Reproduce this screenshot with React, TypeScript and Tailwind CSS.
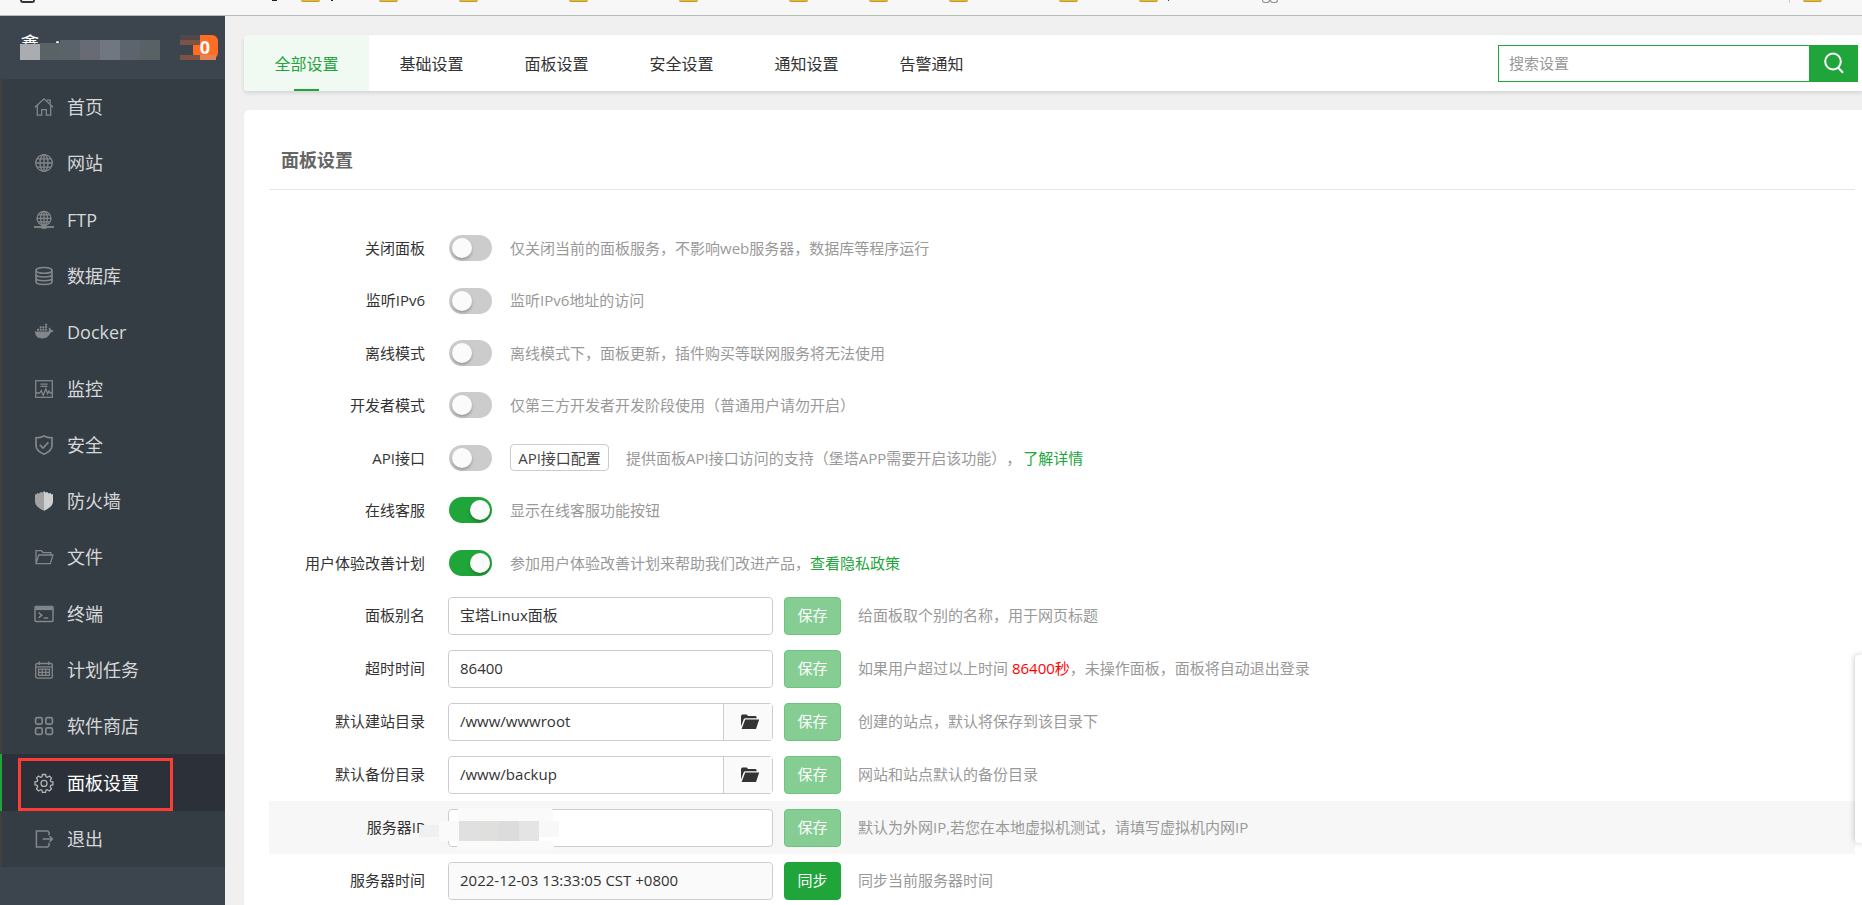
import { useState } from 'react';
import type { ReactNode } from 'react';

interface MenuItem {
  id: string;
  label: string;
  icon: ReactNode;
}

const svgProps = {
  width: 20,
  height: 20,
  viewBox: '0 0 20 20',
  fill: 'none',
  stroke: 'currentColor',
  strokeWidth: 1.3,
  'aria-hidden': true,
} as const;

const HomeIcon = () => (
  <svg {...svgProps}>
    <path d="M1 10.2 10 1.8l9 8.4M3.3 8.6v9.6h4.4v-5.6h4.6v5.6h4.4V8.6M12.8 3.2h3.4v3.4" />
  </svg>
);

const GlobeIcon = () => (
  <svg {...svgProps}>
    <circle cx="10" cy="10" r="8.3" />
    <ellipse cx="10" cy="10" rx="4" ry="8.3" />
    <path d="M10 1.7v16.6M1.7 10h16.6M3 5.8h14M3 14.2h14" />
  </svg>
);

const FtpIcon = () => (
  <svg {...svgProps}>
    <circle cx="10" cy="8.3" r="7" />
    <ellipse cx="10" cy="8.3" rx="3.4" ry="7" />
    <path d="M10 1.3v15M3 8.3h14M4.2 4.8h11.6M4.2 11.8h11.6" />
    <path d="M0 17h20" strokeWidth="1.8" />
    <rect x="7.5" y="15.2" width="5" height="3.6" fill="currentColor" stroke="none" />
  </svg>
);

const DatabaseIcon = () => (
  <svg {...svgProps} strokeWidth="1.6">
    <ellipse cx="10" cy="4.4" rx="8" ry="2.9" />
    <path d="M2 4.4v11.4c0 1.6 3.6 2.7 8 2.7s8-1.1 8-2.7V4.4M2 8.3c0 1.6 3.6 2.7 8 2.7s8-1.1 8-2.7M2 12.1c0 1.6 3.6 2.7 8 2.7s8-1.1 8-2.7" />
  </svg>
);

const DockerIcon = () => (
  <svg {...svgProps} fill="currentColor" stroke="none">
    <path d="M1 9.6h13.6c.5-1 .5-2.3-.1-3.3l.8-.8c1 .6 1.6 1.5 1.7 2.6 1-.2 2 0 2.6.5-.5 1.4-1.7 1.9-3 1.9-1.4 3.9-4.3 6-8.3 6C3.5 16.5 1 14 1 9.6z" />
    <path d="M3 6.8h2v2H3zM5.7 6.8h2v2h-2zM8.4 6.8h2v2h-2zM11.1 6.8h2v2h-2zM5.7 4.2h2v2h-2zM8.4 4.2h2v2h-2zM11.1 4.2h2v2h-2zM11.1 1.7h2v2h-2z" />
  </svg>
);

const MonitorIcon = () => (
  <svg {...svgProps}>
    <rect x="1.7" y="1.7" width="16.6" height="16.6" />
    <path d="M6.5 5.2h7M6.5 7.4h7M2 14h3.6l1.6-2.4 2 4.6 2.6-6.4 1.8 4.8 1.4-2.6 1.2 2H18" />
  </svg>
);

const SafeIcon = () => (
  <svg {...svgProps} strokeWidth="1.7">
    <path d="M10 1c2.4 1.2 5 1.8 8 1.8v7.4c0 4.2-3.4 7-8 9-4.6-2-8-4.8-8-9V2.8C5 2.8 7.6 2.2 10 1z" />
    <path d="m5.8 9.8 3.2 3.2 5.4-5.6" />
  </svg>
);

const FirewallIcon = () => (
  <svg {...svgProps} stroke="none">
    <path d="M10 0 8.4 1.6 6.8 1 5.2 2.6 3 2v1.2H1v7.2c0 4 4 7.2 9 9.4z" fill="#a2a2a2" />
    <path d="m10 0 1.6 1.6 1.6-.6 1.6 1.6L17 2v1.2h2v7.2c0 4-4 7.2-9 9.4z" fill="#cfcfcf" />
  </svg>
);

const FolderIcon = () => (
  <svg {...svgProps}>
    <path d="M2 16V3.7h5.4l1.8 2h7.6v2.2M2 16.6 4.7 8h14.2l-2.6 8.6z" />
  </svg>
);

const TerminalIcon = () => (
  <svg {...svgProps} strokeWidth="1.5">
    <rect x="1" y="2.5" width="18" height="15" rx="1" />
    <path d="M1.5 4.6h17" strokeWidth="3" />
    <path d="m4.6 8.6 3.2 2.6-3.2 2.6M9.6 14h4.6" />
  </svg>
);

const CalendarIcon = () => (
  <svg {...svgProps}>
    <rect x="1.7" y="3.5" width="16.6" height="14.6" rx="1.6" />
    <path d="M5.3 1.4v3.6M14.7 1.4v3.6M1.7 6.8h16.6M4.6 9.2h10.8v6.2H4.6zM4.6 12.3h10.8M8.2 9.2v6.2M11.8 9.2v6.2" />
  </svg>
);

const AppsIcon = () => (
  <svg {...svgProps} strokeWidth="1.7">
    <rect x="1.6" y="1.6" width="6.6" height="6.6" rx="1.6" />
    <rect x="11.8" y="1.6" width="6.6" height="6.6" rx="1.6" />
    <rect x="1.6" y="11.8" width="6.6" height="6.6" rx="1.6" />
    <rect x="11.8" y="11.8" width="6.6" height="6.6" rx="1.6" />
  </svg>
);

const GearIcon = () => (
  <svg {...svgProps} stroke="#b0b2b4">
    <path d="M8.4 1.5h3.2l.4 2.2 1.5.6 1.9-1.3 2.2 2.2-1.3 1.9.6 1.5 2 .3v3l-2.1.5-.6 1.5 1.3 1.9-2.2 2.2-1.9-1.3-1.5.6-.4 2.2H8.4L8 17.3l-1.5-.6L4.6 18l-2.2-2.2 1.3-1.9-.6-1.5-2.1-.5v-3l2.1-.4.6-1.5-1.3-1.9L4.6 3l1.9 1.3L8 3.7z" />
    <circle cx="10" cy="10.4" r="3" />
  </svg>
);

const ExitIcon = () => (
  <svg {...svgProps} strokeWidth="1.5">
    <path d="M15 6.2V3.4L13.6 2H2.4v16h11.2l1.4-1.4v-2.8M8.6 10H18M15.6 7.2 18.4 10l-2.8 2.8" />
  </svg>
);

const menu: MenuItem[] = [
  { id: 'home', label: '首页', icon: <HomeIcon /> },
  { id: 'site', label: '网站', icon: <GlobeIcon /> },
  { id: 'ftp', label: 'FTP', icon: <FtpIcon /> },
  { id: 'database', label: '数据库', icon: <DatabaseIcon /> },
  { id: 'docker', label: 'Docker', icon: <DockerIcon /> },
  { id: 'control', label: '监控', icon: <MonitorIcon /> },
  { id: 'safe', label: '安全', icon: <SafeIcon /> },
  { id: 'firewall', label: '防火墙', icon: <FirewallIcon /> },
  { id: 'files', label: '文件', icon: <FolderIcon /> },
  { id: 'terminal', label: '终端', icon: <TerminalIcon /> },
  { id: 'crontab', label: '计划任务', icon: <CalendarIcon /> },
  { id: 'soft', label: '软件商店', icon: <AppsIcon /> },
  { id: 'config', label: '面板设置', icon: <GearIcon /> },
  { id: 'exit', label: '退出', icon: <ExitIcon /> },
];

const tabs = ['全部设置', '基础设置', '面板设置', '安全设置', '通知设置', '告警通知'];

const bookmark = 'w-[19px] h-0.5 rounded-b-sm bg-[#e5b83b] border-b border-[#bf9a2c]';

// Lower edge of the browser's bookmark bar
const bookmarks = [
  'ml-5 w-[15px] h-[3px] rounded-b border-2 border-t-0 border-[#333]',
  'ml-[237px] w-[5px] h-px bg-[#222]',
  `ml-[24px] ${bookmark}`,
  'ml-[11px] w-0.5 h-px bg-[#222]',
  `ml-[46px] ${bookmark}`,
  `ml-[61px] ${bookmark}`,
  `ml-[91px] ${bookmark}`,
  `ml-[91px] ${bookmark}`,
  `ml-[91px] ${bookmark}`,
  `ml-[61px] ${bookmark}`,
  `ml-[61px] ${bookmark}`,
  `ml-[91px] ${bookmark}`,
  `ml-[61px] ${bookmark}`,
  'ml-[10px] w-px h-px bg-[#444]',
  'ml-[93px] w-2 h-[3px] rounded-b-sm border border-t-0 border-[#8a8d92]',
  'w-2 h-[3px] rounded-b-sm border border-t-0 border-[#8a8d92]',
  'ml-auto w-px h-[3px] bg-[#ccc]',
  `ml-[13px] mr-10 ${bookmark}`,
];

function BrowserEdge() {
  return (
    <div className="flex h-4 shrink-0 items-start border-b border-[#b9bdba] bg-[#f7f7f7]">
      {bookmarks.map((cls, i) => (
        <span key={i} className={`shrink-0 ${cls}`} />
      ))}
    </div>
  );
}

function SidebarHeader() {
  return (
    <div className="flex h-[63px] items-start justify-between pt-[19px] pl-5 pr-[7px]">
      <div className="relative h-[25px] w-[140px]">
        <span className="block text-xl leading-5 text-white">鑫</span>
        <span className="absolute left-[36px] top-[6px] size-[3px] rounded-t-full bg-white" />
        <div className="absolute inset-x-0 bottom-0 flex items-end">
          <i className="h-4 w-5 bg-[#a9adb2]" />
          <i className="h-[17px] w-5 bg-[#596265]" />
          <i className="h-5 w-5 bg-[#5a626a]" />
          <i className="h-5 w-5 bg-[#686b73]" />
          <i className="h-5 w-5 bg-[#707780]" />
          <i className="h-5 w-5 bg-[#5d646e]" />
          <i className="h-5 w-5 bg-[#586164]" />
        </div>
      </div>
      <div className="relative flex w-[38px] justify-end">
        <span className="h-6 w-[25px] rounded-md bg-[#ff6c23] pr-px text-center text-lg leading-[24px] font-bold text-white">
          0
        </span>
        <div className="absolute left-0 top-0 flex flex-col">
          <i className="h-[5px] w-5 bg-[#51484c]" />
          <i className="h-[5px] w-5 bg-[#7c5343]" />
          <i className="h-[10px] w-[13px] bg-[#3c444d]" />
          <div className="flex">
            <i className="h-[5px] w-5 bg-[#7c5343]" />
            <i className="h-[5px] w-4 bg-[#e18356]" />
          </div>
        </div>
      </div>
    </div>
  );
}

function Sidebar() {
  const [active, setActive] = useState('config');

  return (
    <aside className="w-[225px] shrink-0 bg-[#3c444d]">
      <SidebarHeader />
      <ul className="grid h-[788px] auto-rows-fr bg-[#353d44]">
        {menu.map((item) => {
          const isActive = item.id === active;
          return (
            <li key={item.id} className="relative flex">
              <a
                href={`#${item.id}`}
                onClick={() => setActive(item.id)}
                className={`flex flex-1 items-center gap-[13px] border-l-2 pl-8 text-lg ${
                  isActive
                    ? 'border-[#20a53a] bg-[#2c3038] text-white'
                    : 'border-[#43403f] text-[#d6d7d9]'
                }`}
              >
                <span className="text-[#83878a]">{item.icon}</span>
                {item.label}
              </a>
              {item.id === 'config' && (
                <span className="pointer-events-none absolute left-[18px] top-1 h-[53px] w-[155px] border-3 border-[#ff3b36]" />
              )}
            </li>
          );
        })}
      </ul>
    </aside>
  );
}

function TopBar() {
  const [current, setCurrent] = useState(0);

  return (
    <div className="flex h-14 shrink-0 items-stretch justify-between rounded-l bg-white pr-1 shadow-[0_2px_4px_rgba(0,0,0,0.12)]">
      <nav className="flex">
        {tabs.map((tab, i) => (
          <button
            key={tab}
            type="button"
            onClick={() => setCurrent(i)}
            className={`relative w-[125px] cursor-pointer pt-0.5 text-base ${
              i === current ? 'rounded-l bg-[#f0f9f2] text-[#20a53a]' : 'text-[#333]'
            }`}
          >
            {tab}
            {i === current && (
              <span className="absolute bottom-0 left-[50px] h-0.5 w-[25px] bg-[#20a53a]" />
            )}
          </button>
        ))}
      </nav>
      <form className="flex h-[37px] w-[360px] self-center" onSubmit={(e) => e.preventDefault()}>
        <input
          type="text"
          aria-label="搜索设置"
          placeholder="搜索设置"
          className="min-w-0 flex-1 border border-r-0 border-[#20a53a] px-2.5 text-[15px] outline-none placeholder:text-[#999]"
        />
        <button
          type="submit"
          aria-label="搜索"
          className="flex w-[49px] items-center justify-center bg-[#20a53a] text-white"
        >
          <svg width="22" height="22" viewBox="0 0 22 22" fill="none" stroke="currentColor" strokeWidth="2">
            <ellipse cx="10" cy="9.5" rx="7.8" ry="8" />
            <path d="m15 15.5 5 5.2" />
          </svg>
        </button>
      </form>
    </div>
  );
}

interface SwitchRowProps {
  id: string;
  label: string;
  defaultOn?: boolean;
  children: ReactNode;
}

function SwitchRow({ id, label, defaultOn = false, children }: SwitchRowProps) {
  const [on, setOn] = useState(defaultOn);

  return (
    <div className="flex items-center text-[15px] text-[#999]">
      <label htmlFor={id} className="w-[156px] text-right text-[#333]">
        {label}
      </label>
      <span className="relative ml-6 mr-[18px] flex h-[26px] w-[43px]">
        <input
          id={id}
          type="checkbox"
          role="switch"
          checked={on}
          onChange={() => setOn(!on)}
          className="peer h-[26px] w-[43px] cursor-pointer appearance-none rounded-full bg-[#ccc] checked:bg-[#20a53a]"
        />
        <span className="pointer-events-none absolute left-[3px] top-[3px] size-5 rounded-full bg-[#fbfbfb] shadow-[0_2px_3px_rgba(0,0,0,0.25)] peer-checked:left-[21px]" />
      </span>
      {children}
    </div>
  );
}

interface FieldRowProps {
  id: string;
  label: string;
  value: string;
  action?: string;
  disabled?: boolean;
  folder?: boolean;
  masked?: boolean;
  children: ReactNode;
}

function FieldRow({ id, label, value, action = '保存', disabled, folder, masked, children }: FieldRowProps) {
  return (
    <div className={`flex h-[53px] items-center text-[15px] text-[#999] ${masked ? 'bg-[#f7f7f7]' : ''}`}>
      <label htmlFor={id} className="w-[156px] text-right text-[#333]">
        {label}
      </label>
      <div className="relative ml-[23px] mr-[11px] flex h-[38px] w-[325px] rounded-sm border border-[#ccc]">
        <input
          id={id}
          type="text"
          defaultValue={value}
          disabled={disabled}
          className="min-w-0 flex-1 rounded-sm bg-white px-[11px] text-[#333] outline-none disabled:bg-[#fafafa]"
        />
        {folder && (
          <button
            type="button"
            aria-label="选择目录"
            className="flex w-[49px] items-center justify-center border-l border-[#ccc] bg-[#fafafa] pl-1 text-[#333]"
          >
            <svg width="20" height="16" viewBox="0 0 20 16" fill="currentColor" aria-hidden>
              <path d="M1 12.5V1.8L2.2.6h4.6L8 2h7.6l1 1v1.3H5L3.8 5z" />
              <path d="M5.2 5.6h14L16 15H1.6z" />
            </svg>
          </button>
        )}
        {masked && <IpMask />}
      </div>
      <button
        type="button"
        className={`mr-[17px] h-[38px] w-[57px] cursor-pointer rounded border ${
          action === '保存'
            ? 'border-[#6dc57f] bg-[#85cd93] text-white'
            : 'border-[#20a53a] bg-[#20a53a] text-white'
        }`}
      >
        {action}
      </button>
      <span>{children}</span>
    </div>
  );
}

// Mosaic laid over the server address
function IpMask() {
  return (
    <div className="pointer-events-none absolute -left-[30px] -top-[2px] w-[140px]">
      <div className="ml-[39px] h-[13px] w-[95px] rounded-r bg-[#fafafa]" />
      <div className="flex h-5 items-stretch">
        <i className="mt-1 h-3 w-5 bg-[#eff1f1]" />
        <i className="w-5 bg-[#fafafa]" />
        <i className="w-5 bg-[#e0e0e0]" />
        <i className="w-5 bg-[#dfdfdd]" />
        <i className="w-5 bg-[#dcdcdc]" />
        <i className="w-5 bg-[#e4e4e4]" />
        <i className="h-4 w-5 bg-[#f8f8f8]" />
      </div>
      <div className="ml-[38px] h-[9px] w-[97px] rounded-r bg-[#fafafa]" />
    </div>
  );
}

function PanelSettings() {
  return (
    <section className="flex-1 rounded-tl-md bg-white pl-[25px] pr-[7px]">
      <h3 className="border-b border-[#e5e5e5] pb-4 pl-3 pt-[37px] text-lg leading-[26px] font-bold text-[#666]">
        面板设置
      </h3>
      <div className="mt-8 grid h-[367px] auto-rows-fr">
        <SwitchRow id="closePanel" label="关闭面板">
          仅关闭当前的面板服务，不影响web服务器，数据库等程序运行
        </SwitchRow>
        <SwitchRow id="ipv6" label="监听IPv6">
          监听IPv6地址的访问
        </SwitchRow>
        <SwitchRow id="local" label="离线模式">
          离线模式下，面板更新，插件购买等联网服务将无法使用
        </SwitchRow>
        <SwitchRow id="debug" label="开发者模式">
          仅第三方开发者开发阶段使用（普通用户请勿开启）
        </SwitchRow>
        <SwitchRow id="api" label="API接口">
          <button
            type="button"
            className="mr-[17px] h-[27px] w-[99px] cursor-pointer rounded-sm border border-[#ccc] bg-white text-[#444]"
          >
            API接口配置
          </button>
          提供面板API接口访问的支持（堡塔APP需要开启该功能），
          <a href="#api-help" className="ml-0.5 text-[#20a53a]">
            了解详情
          </a>
        </SwitchRow>
        <SwitchRow id="service" label="在线客服" defaultOn>
          显示在线客服功能按钮
        </SwitchRow>
        <SwitchRow id="improvement" label="用户体验改善计划" defaultOn>
          参加用户体验改善计划来帮助我们改进产品，
          <a href="#privacy" className="text-[#20a53a]">
            查看隐私政策
          </a>
        </SwitchRow>
      </div>
      <FieldRow id="alias" label="面板别名" value="宝塔Linux面板">
        给面板取个别的名称，用于网页标题
      </FieldRow>
      <FieldRow id="timeout" label="超时时间" value="86400">
        如果用户超过以上时间 <span className="text-[#f00]">86400秒</span>，未操作面板，面板将自动退出登录
      </FieldRow>
      <FieldRow id="sitePath" label="默认建站目录" value="/www/wwwroot" folder>
        创建的站点，默认将保存到该目录下
      </FieldRow>
      <FieldRow id="backupPath" label="默认备份目录" value="/www/backup" folder>
        网站和站点默认的备份目录
      </FieldRow>
      <FieldRow id="address" label="服务器IP" value="" masked>
        默认为外网IP,若您在本地虚拟机测试，请填写虚拟机内网IP
      </FieldRow>
      <FieldRow id="time" label="服务器时间" value="2022-12-03 13:33:05 CST +0800" action="同步" disabled>
        同步当前服务器时间
      </FieldRow>
    </section>
  );
}

export default function App() {
  return (
    <div className="flex h-screen flex-col overflow-hidden bg-[#f0f0f0] font-['Open_Sans','Noto_Sans_CJK_SC',sans-serif] [text-spacing-trim:space-all]">
      <BrowserEdge />
      <div className="flex min-h-0 flex-1">
        <Sidebar />
        <main className="flex min-w-0 flex-1 flex-col gap-[19px] pl-[19px] pt-[19px]">
          <TopBar />
          <PanelSettings />
        </main>
      </div>
      <div className="fixed bottom-[62px] right-0 h-[188px] w-[7px] rounded-l bg-white shadow-[0_0_6px_rgba(0,0,0,0.25)]" />
    </div>
  );
}
